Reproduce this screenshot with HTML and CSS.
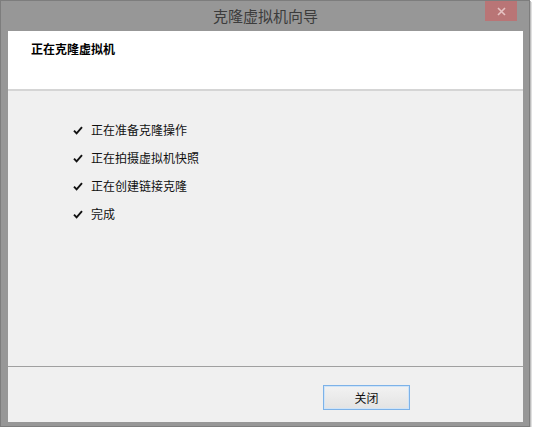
FILE: index.html
```html
<!DOCTYPE html>
<html lang="zh-CN">
<head>
<meta charset="utf-8">
<title>克隆虚拟机向导</title>
<link rel="stylesheet" href="styles.css">
</head>
<body>
<div class="window">
  <div class="titlebar">
    <span></span>
    <span class="title">克隆虚拟机向导</span>
    <span class="close">
      <svg width="9" height="9" viewBox="0 0 9 9"><path d="M1 1 L8 8 M8 1 L1 8" stroke="#e6c3c3" stroke-width="1.6" fill="none"/></svg>
    </span>
  </div>
  <div class="content">
    <div class="header">
      <div class="heading">正在克隆虚拟机</div>
    </div>
    <div class="body">
      <ul class="steps">
        <li class="step"><svg class="check" width="10" height="9" viewBox="0 0 10 9"><path d="M1 4.6 L3.6 7.4 L9 1.2" stroke="#111" stroke-width="1.9" fill="none"/></svg><span>正在准备克隆操作</span></li>
        <li class="step"><svg class="check" width="10" height="9" viewBox="0 0 10 9"><path d="M1 4.6 L3.6 7.4 L9 1.2" stroke="#111" stroke-width="1.9" fill="none"/></svg><span>正在拍摄虚拟机快照</span></li>
        <li class="step"><svg class="check" width="10" height="9" viewBox="0 0 10 9"><path d="M1 4.6 L3.6 7.4 L9 1.2" stroke="#111" stroke-width="1.9" fill="none"/></svg><span>正在创建链接克隆</span></li>
        <li class="step"><svg class="check" width="10" height="9" viewBox="0 0 10 9"><path d="M1 4.6 L3.6 7.4 L9 1.2" stroke="#111" stroke-width="1.9" fill="none"/></svg><span>完成</span></li>
      </ul>
    </div>
    <div class="footer">
      <button class="btn">关闭</button>
    </div>
  </div>
</div>
</body>
</html>
```

FILE: styles.css
```css
html, body {
  margin: 0;
  padding: 0;
  background: #ffffff;
}
body {
  font-family: "Noto Sans CJK SC", "Noto Sans", sans-serif;
  font-size: 12px;
  color: #111;
}
.window {
  box-sizing: border-box;
  width: 530px;
  height: 427px;
  border: 1px solid #7d7d7d;
  background: #979797;
  padding: 0 6px 4px 7px;
  display: flex;
  flex-direction: column;
  box-shadow: 1px 1px 0 #bdbdbd, 2px 2px 0 #e0e0e0;
}
.titlebar {
  height: 30px;
  display: grid;
  grid-template-columns: 1fr auto 1fr;
  align-items: start;
}
.title {
  font-size: 15px;
  line-height: 29px;
  color: #3c3c3c;
}
.close {
  justify-self: end;
  margin-right: 6px;
  width: 32px;
  height: 20px;
  background: #b97576;
  display: flex;
  align-items: center;
  justify-content: center;
}
.content {
  flex: 1;
  display: flex;
  flex-direction: column;
  background: #f0f0f0;
}
.header {
  height: 58px;
  background: #ffffff;
  border-bottom: 2px solid #d5d5d5;
  box-sizing: content-box;
}
.heading {
  padding: 10px 0 0 23px;
  font-weight: bold;
  line-height: 16px;
  color: #000;
}
.body {
  flex: 1;
  border-bottom: 1px solid #a0a0a0;
}
.steps {
  list-style: none;
  margin: 0;
  padding: 31px 0 0 65px;
  display: flex;
  flex-direction: column;
  gap: 12px;
}
.step {
  display: flex;
  align-items: center;
  height: 16px;
  line-height: 16px;
}
.check {
  margin-right: 8px;
}
.footer {
  height: 55px;
  display: flex;
  justify-content: flex-end;
  align-items: flex-start;
  padding-right: 113px;
}
.btn {
  margin-top: 18px;
  width: 87px;
  height: 25px;
  border: 1px solid #7db2e8;
  box-shadow: inset 0 0 0 1px #cfe4f8;
  background: linear-gradient(#f2f2f2, #e3e3e3);
  font-family: "Noto Sans CJK SC", sans-serif;
  font-size: 12px;
  color: #111;
  padding: 0;
}
```
